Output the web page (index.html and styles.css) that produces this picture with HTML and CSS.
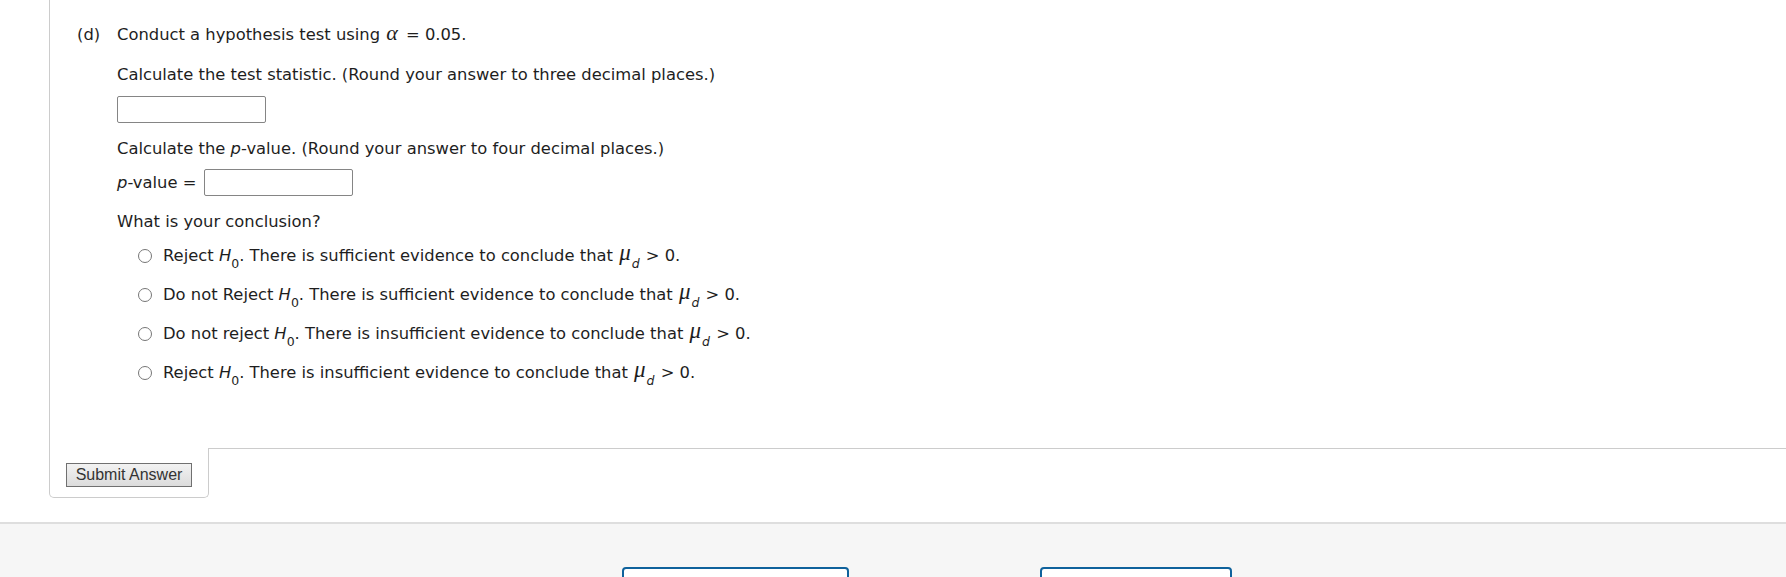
FILE: index.html
```html
<!DOCTYPE html>
<html lang="en">
<head>
<meta charset="utf-8">
<title>Hypothesis test</title>
<link rel="stylesheet" href="styles.css">
</head>
<body>
<div class="question">
  <div class="qbox">
    <div class="part">
      <span class="part-label">(d)</span>
      <div class="part-body">
        <p class="line">Conduct a hypothesis test using <span class="math alpha">α</span> = 0.05.</p>
        <p class="line gap-lg">Calculate the test statistic. (Round your answer to three decimal places.)</p>
        <input class="answer answer-stat" type="text" aria-label="test statistic">
        <p class="line gap-md">Calculate the <i>p</i>-value. (Round your answer to four decimal places.)</p>
        <div class="pvalue-row"><span><i>p</i>-value =</span><input class="answer" type="text" aria-label="p-value"></div>
        <p class="line gap-sm">What is your conclusion?</p>
        <ul class="options">
          <li><label><input type="radio" name="concl"><span>Reject <i>H</i><sub>0</sub>. There is sufficient evidence to conclude that <span class="math mu">μ</span><sub class="msub">d</sub> &gt; 0.</span></label></li>
          <li><label><input type="radio" name="concl"><span>Do not Reject <i>H</i><sub>0</sub>. There is sufficient evidence to conclude that <span class="math mu">μ</span><sub class="msub">d</sub> &gt; 0.</span></label></li>
          <li><label><input type="radio" name="concl"><span>Do not reject <i>H</i><sub>0</sub>. There is insufficient evidence to conclude that <span class="math mu">μ</span><sub class="msub">d</sub> &gt; 0.</span></label></li>
          <li><label><input type="radio" name="concl"><span>Reject <i>H</i><sub>0</sub>. There is insufficient evidence to conclude that <span class="math mu">μ</span><sub class="msub">d</sub> &gt; 0.</span></label></li>
        </ul>
      </div>
    </div>
  </div>
  <div class="actions">
    <div class="submit-cell"><button class="submit" type="button">Submit Answer</button></div>
    <div class="actions-rest"></div>
  </div>
</div>
<footer class="footer">
  <div class="nav-btn nav-btn-wide"></div>
  <div class="nav-btn nav-btn-narrow"></div>
</footer>
</body>
</html>
```

FILE: styles.css
```css
html, body {
  margin: 0;
  padding: 0;
  background: #ffffff;
}

body {
  font-family: "DejaVu Sans", Verdana, sans-serif;
  font-size: 16.35px;
  color: #1e1e1e;
  overflow: hidden;
}

.question {
  padding-bottom: 24px;
}

.qbox {
  margin-left: 49px;
  border-left: 1px solid #cccccc;
  height: 448px;
  box-sizing: border-box;
  padding-top: 25px;
  padding-left: 27px;
}

.part {
  display: flex;
}

.part-label {
  width: 40px;
  flex: none;
  line-height: 20px;
}

.part-body {
  display: flex;
  flex-direction: column;
  align-items: flex-start;
}

.line {
  margin: 0;
  line-height: 20px;
  height: 20px;
}

.gap-lg {
  margin-top: 20px;
}

.gap-md {
  margin-top: 16px;
}

.gap-sm {
  margin-top: 16px;
}

.math {
  font-family: "Liberation Serif", "DejaVu Serif", serif;
  font-style: italic;
  line-height: 0;
}

.alpha {
  font-size: 22px;
  margin-left: 1px;
  margin-right: 3px;
}

.mu {
  font-size: 23px;
  position: relative;
  top: -1px;
  margin-left: 1px;
}

i {
  font-style: italic;
}

sub {
  font-size: 12.5px;
  vertical-align: -7px;
  line-height: 0;
}

.msub {
  font-style: italic;
  margin-left: 1px;
  margin-right: 1px;
}

.answer {
  box-sizing: border-box;
  width: 149px;
  height: 27px;
  margin: 0;
  padding: 2px 4px;
  border: 1px solid #858585;
  border-radius: 2px;
  background: #ffffff;
  font: inherit;
}

.answer-stat {
  margin-top: 11px;
}

.pvalue-row {
  margin-top: 10px;
  display: flex;
  align-items: center;
  gap: 8px;
  line-height: 20px;
}

.options {
  list-style: none;
  margin: 14px 0 0 21px;
  padding: 0;
  display: flex;
  flex-direction: column;
  gap: 19px;
}

.options li {
  line-height: 20px;
  height: 20px;
}

.options label {
  display: flex;
  align-items: center;
  gap: 11px;
  height: 20px;
}

.options input[type="radio"] {
  width: 14px;
  height: 14px;
  margin: 0;
  flex: none;
}

.actions {
  display: flex;
  margin-left: 49px;
}

.submit-cell {
  width: 160px;
  box-sizing: border-box;
  height: 50px;
  border: 1px solid #cccccc;
  border-top: none;
  border-radius: 0 0 5px 5px;
  padding: 15px 0 0 16px;
}

.submit {
  box-sizing: border-box;
  width: 126px;
  height: 24px;
  padding: 0;
  border: 1px solid #707070;
  background: linear-gradient(#f2f2f2, #dcdcdc);
  font-family: "Liberation Sans", Arial, sans-serif;
  font-size: 16px;
  color: #333333;
  line-height: 22px;
}

.actions-rest {
  flex: 1;
  border-top: 1px solid #cccccc;
}

.footer {
  border-top: 2px solid #dedede;
  background: #f6f6f6;
  height: 200px;
  display: flex;
  align-items: flex-start;
  padding-top: 43px;
  padding-left: 622px;
  gap: 191px;
}

.nav-btn {
  box-sizing: border-box;
  height: 44px;
  border: 2px solid #0f629c;
  border-radius: 4px;
  background: #ffffff;
}

.nav-btn-wide {
  width: 227px;
}

.nav-btn-narrow {
  width: 192px;
}
```
